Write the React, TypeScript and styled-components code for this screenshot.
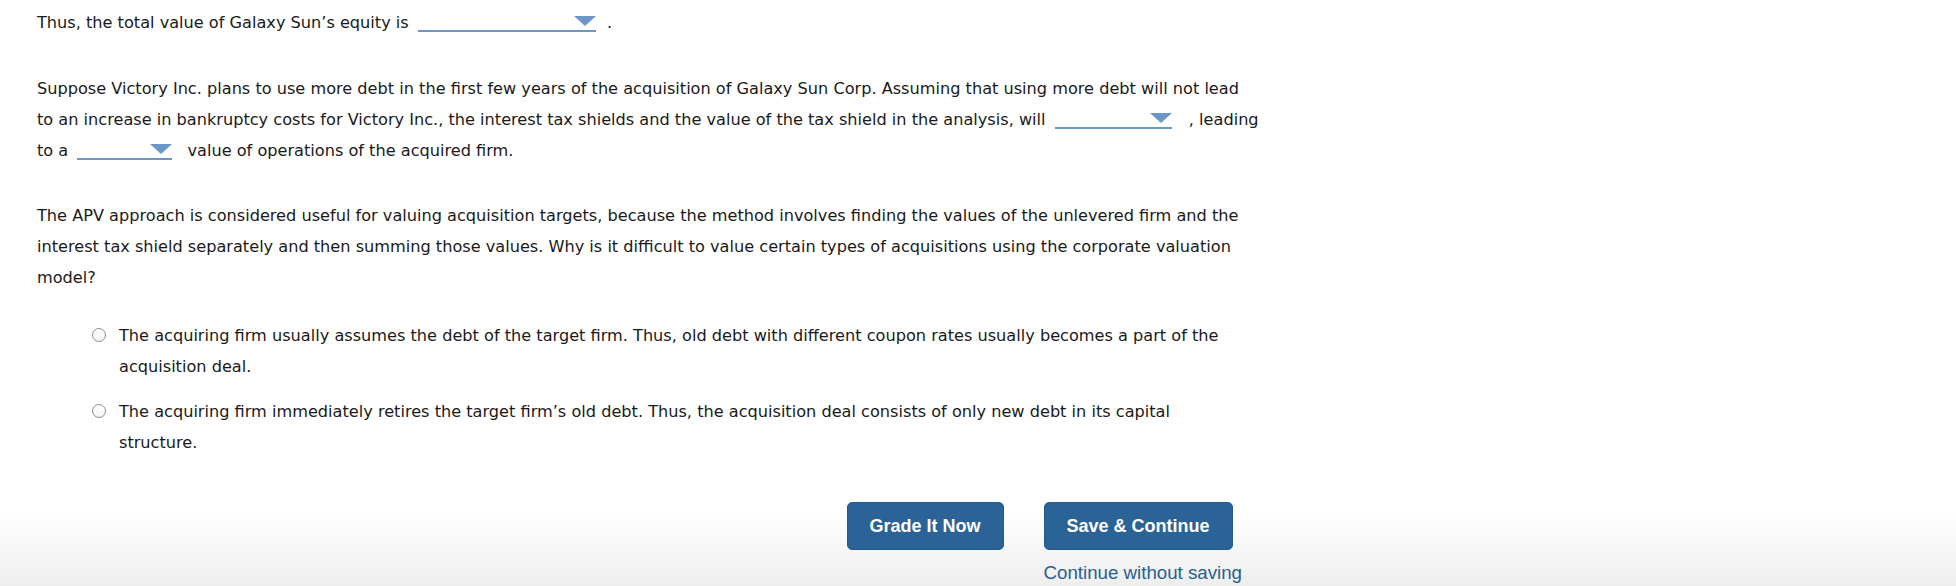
import React from "react";
import styled, { createGlobalStyle } from "styled-components";

const Global = createGlobalStyle`
  html, body { margin: 0; padding: 0; background: #ffffff; }
  body {
    font-family: "DejaVu Sans", Verdana, sans-serif;
    color: #1a1a1a;
  }
`;

const Page = styled.div`
  min-height: 586px;
  box-sizing: border-box;
  padding: 7px 0 0 37px;
  background: linear-gradient(to bottom, #ffffff 0, #ffffff 512px, #eeeeee 586px);
`;

const Column = styled.div`
  width: 1222px;
  font-size: 16.15px;
  line-height: 31px;
`;

const Para = styled.p<{ $gap: number }>`
  margin: ${(p) => p.$gap}px 0 0 0;
`;

const Select = styled.span<{ $w: number; $mr?: number }>`
  display: inline-block;
  overflow: hidden;
  box-sizing: content-box;
  width: ${(p) => p.$w}px;
  height: 20px;
  line-height: 20px;
  text-align: right;
  margin: 0 ${(p) => p.$mr ?? 4}px 0 4px;
  border-bottom: 2px solid #6a97c8;
  vertical-align: -4px;
`;

const Arrow = styled.span`
  display: inline-block;
  vertical-align: middle;
  width: 0;
  height: 0;
  border-left: 11px solid transparent;
  border-right: 11px solid transparent;
  border-top: 10px solid #6a97c8;
`;

const Options = styled.div`
  margin: 27px 27px 0 55px;
  display: flex;
  flex-direction: column;
  gap: 14px;
`;

const Option = styled.label`
  display: grid;
  grid-template-columns: 14px 1fr;
  column-gap: 13px;
  align-items: start;
  cursor: pointer;
`;

const Radio = styled.span`
  display: block;
  width: 14px;
  height: 14px;
  box-sizing: border-box;
  margin-top: 8px;
  border: 1px solid #8e8e8e;
  border-radius: 50%;
  background: linear-gradient(#ffffff, #f4f4f4);
`;

const Footer = styled.div`
  width: 1205px;
  margin-top: 44px;
  display: flex;
  justify-content: flex-end;
  align-items: flex-start;
  gap: 40px;
  font-family: "Liberation Sans", Arial, sans-serif;
`;

const ActionCol = styled.div`
  display: flex;
  flex-direction: column;
  align-items: flex-start;
  gap: 12px;
`;

const Button = styled.button`
  height: 48px;
  padding: 0 22px;
  border: 1px solid #245a8c;
  border-radius: 5px;
  background: #2b6397;
  color: #ffffff;
  font-family: "Liberation Sans", Arial, sans-serif;
  font-weight: bold;
  font-size: 18px;
  cursor: pointer;
`;

const LinkText = styled.a`
  font-size: 18.7px;
  line-height: 21px;
  color: #2b5e8f;
  text-decoration: none;
  cursor: pointer;
`;

const Dropdown = ({ w, mr }: { w: number; mr?: number }) => (
  <Select $w={w} $mr={mr}>
    <Arrow />
  </Select>
);

export default function App() {
  return (
    <>
      <Global />
      <Page>
        <Column>
          <Para $gap={0}>
            Thus, the total value of Galaxy Sun’s equity is <Dropdown w={178} mr={6} /> .
          </Para>
          <Para $gap={35}>
            Suppose Victory Inc. plans to use more debt in the first few years of the acquisition of Galaxy Sun
            Corp. Assuming that using more debt will not lead to an increase in bankruptcy costs for Victory Inc.,
            the interest tax shields and the value of the tax shield in the analysis, will{" "}
            <Dropdown w={117} mr={12} /> , leading to a <Dropdown w={95} mr={10} /> value of operations of the
            acquired firm.
          </Para>
          <Para $gap={34}>
            The APV approach is considered useful for valuing acquisition targets, because the method involves
            finding the values of the unlevered firm and the interest tax shield separately and then summing those
            values. Why is it difficult to value certain types of acquisitions using the corporate valuation model?
          </Para>
          <Options>
            <Option>
              <Radio />
              <span>
                The acquiring firm usually assumes the debt of the target firm. Thus, old debt with different coupon
                rates usually becomes a part of the acquisition deal.
              </span>
            </Option>
            <Option>
              <Radio />
              <span>
                The acquiring firm immediately retires the target firm’s old debt. Thus, the acquisition deal
                consists of only new debt in its capital structure.
              </span>
            </Option>
          </Options>
        </Column>
        <Footer>
          <Button type="button">Grade It Now</Button>
          <ActionCol>
            <Button type="button">Save &amp; Continue</Button>
            <LinkText>Continue without saving</LinkText>
          </ActionCol>
        </Footer>
      </Page>
    </>
  );
}
